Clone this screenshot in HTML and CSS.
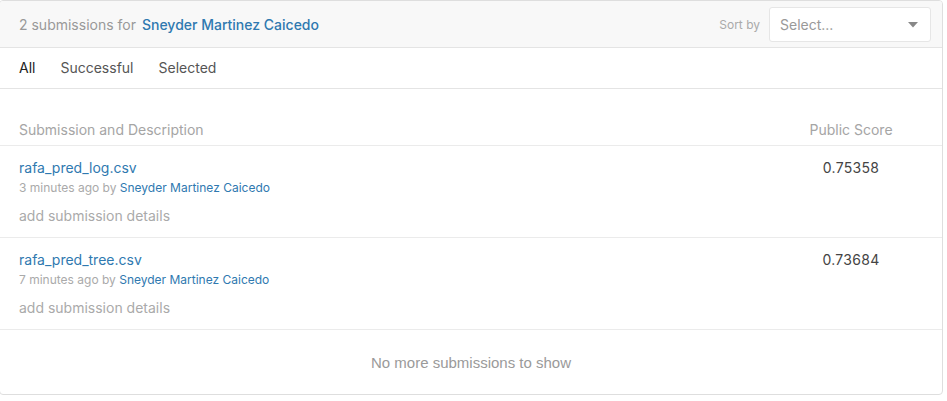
FILE: index.html
```html
<!DOCTYPE html>
<html>
<head>
<meta charset="utf-8">
<link rel="stylesheet" href="styles.css">
</head>
<body>
<div class="card">
  <div class="head">
    <div class="title">2 submissions for <a class="link strong">Sneyder Martinez Caicedo</a></div>
    <div class="sort">
      <span class="sort-label">Sort by</span>
      <div class="select">
        <span>Select...</span>
        <svg width="10" height="6" viewBox="0 0 10 6"><path d="M0 0h10L5 5.5z" fill="#888"/></svg>
      </div>
    </div>
  </div>
  <div class="tabs">
    <span class="tab active">All</span>
    <span class="tab">Successful</span>
    <span class="tab">Selected</span>
  </div>
  <div class="row colhead">
    <div class="main">Submission and Description</div>
    <div class="score">Public Score</div>
  </div>
  <div class="row sub">
    <div class="main">
      <div class="file link">rafa_pred_log.csv</div>
      <div class="meta">3 minutes ago by <a class="link">Sneyder Martinez Caicedo</a></div>
      <div class="details">add submission details</div>
    </div>
    <div class="score value">0.75358</div>
  </div>
  <div class="row sub">
    <div class="main">
      <div class="file link">rafa_pred_tree.csv</div>
      <div class="meta">7 minutes ago by <a class="link">Sneyder Martinez Caicedo</a></div>
      <div class="details">add submission details</div>
    </div>
    <div class="score value">0.73684</div>
  </div>
  <div class="footer">No more submissions to show</div>
</div>
</body>
</html>
```

FILE: styles.css
```css
html, body {
  margin: 0;
  padding: 0;
  background: #fff;
}
body {
  font-family: Inter, "Noto Sans", sans-serif;
  font-size: 14px;
  color: #333;
}
.card {
  box-sizing: border-box;
  width: 944px;
  margin-left: -1px;
  border: 1px solid #dedede;
  border-radius: 4px;
  overflow: hidden;
}
.link {
  color: #2f79b0;
  text-decoration: none;
}
.strong {
  font-weight: 500;
  margin-left: 2px;
}
.head {
  height: 46px;
  background: #f8f8f8;
  border-bottom: 1px solid #e4e4e4;
  display: flex;
  align-items: center;
  justify-content: space-between;
  padding: 0 11px 0 19px;
}
.title {
  color: #999;
  font-size: 14px;
}
.sort {
  display: flex;
  align-items: center;
  gap: 9px;
}
.sort-label {
  font-size: 12px;
  color: #aaa;
}
.select {
  box-sizing: border-box;
  width: 162px;
  height: 35px;
  background: #fff;
  border: 1px solid #e6e6e6;
  border-radius: 3px;
  display: flex;
  align-items: center;
  justify-content: space-between;
  padding: 0 12px 0 10px;
  color: #999;
  font-size: 14px;
}
.select svg {
  margin-top: 1px;
}
.tabs {
  height: 40px;
  border-bottom: 1px solid #e4e4e4;
  display: flex;
  align-items: center;
  gap: 25px;
  padding: 0 19px 2px;
  box-sizing: border-box;
  height: 41px;
  border-bottom: 1px solid #e4e4e4;
}
.tab {
  color: #555;
  font-size: 14px;
}
.tab.active {
  color: #222;
}
.row {
  display: flex;
  border-bottom: 1px solid #ebebeb;
  padding: 0 31px 0 19px;
}
.main {
  flex: 1;
}
.score {
  width: 120px;
  text-align: center;
}
.colhead {
  height: 57px;
  box-sizing: border-box;
  align-items: flex-end;
  color: #a5a5a5;
  font-size: 14px;
}
.colhead .main, .colhead .score {
  line-height: 20px;
  margin-bottom: 5px;
}
.sub {
  height: 92px;
  box-sizing: border-box;
  padding-top: 12px;
}
.file {
  line-height: 20px;
  font-size: 14px;
}
.meta {
  font-size: 12px;
  color: #aaa;
  line-height: 18px;
  margin-top: 1px;
}
.details {
  font-size: 14px;
  color: #aaa;
  line-height: 20px;
  margin-top: 9px;
}
.value {
  color: #444;
  line-height: 20px;
  letter-spacing: 0.3px;
}
.footer {
  height: 64px;
  display: flex;
  align-items: center;
  justify-content: center;
  font-family: "Liberation Sans", Arial, sans-serif;
  color: #9a9a9a;
  font-size: 15px;
  padding-top: 1px;
  box-sizing: border-box;
}
```
